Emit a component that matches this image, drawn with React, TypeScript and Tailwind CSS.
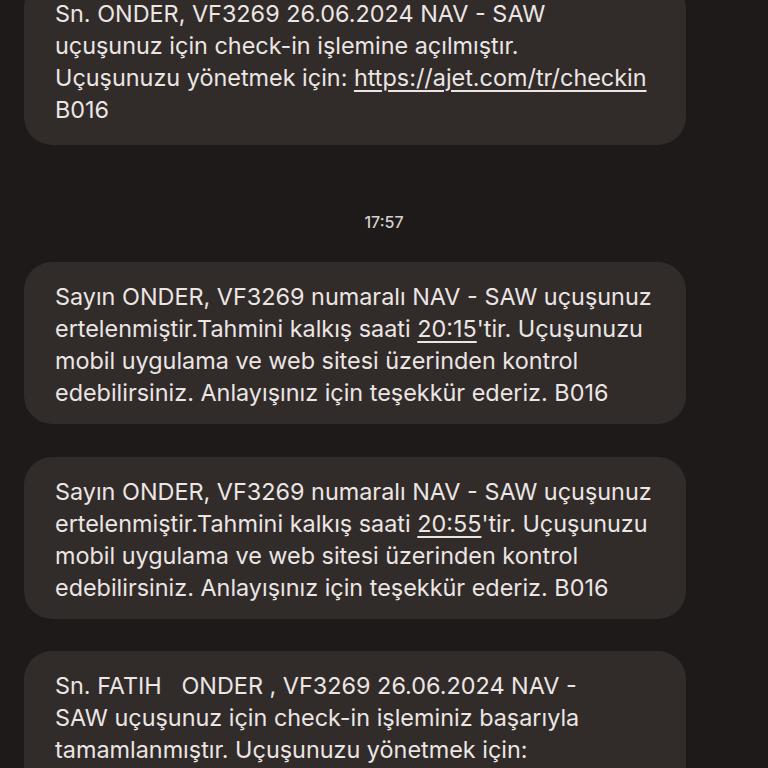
import React from 'react';

const Line: React.FC<{ children: React.ReactNode }> = ({ children }) => (
  <div className="whitespace-pre">{children}</div>
);

const U: React.FC<{ children: React.ReactNode }> = ({ children }) => (
  <span className="underline decoration-[1.5px] underline-offset-[4px]">{children}</span>
);

const Bubble: React.FC<{ className?: string; children: React.ReactNode }> = ({ className = '', children }) => (
  <div className={`w-[662px] rounded-[28px] bg-[#312b2a] pl-[31px] pr-4 text-[23.4px] leading-[32px] text-[#ebe5e3] ${className}`}>
    {children}
  </div>
);

const App: React.FC = () => {
  return (
    <div className="h-[768px] w-[768px] overflow-hidden bg-[#1e1a19] font-['Inter',_'Noto_Sans',_sans-serif]">
      <div className="flex flex-col px-6">
        <Bubble className="-mt-[20px] pt-[18px] pb-[19px]">
          <Line>Sn. ONDER, VF3269 26.06.2024 NAV - SAW</Line>
          <Line>uçuşunuz için check-in işlemine açılmıştır.</Line>
          <Line>
            Uçuşunuzu yönetmek için: <U>https://ajet.com/tr/checkin</U>
          </Line>
          <Line>B016</Line>
        </Bubble>

        <div className="mt-[67px] mb-[30px] w-[720px] text-center text-[16px] leading-[20px] font-medium text-[#d6d0ce]">
          17:57
        </div>

        <Bubble className="pt-[19px] pb-[15px]">
          <Line>Sayın ONDER, VF3269 numaralı NAV - SAW uçuşunuz</Line>
          <Line>
            ertelenmiştir.Tahmini kalkış saati <U>20:15</U>'tir. Uçuşunuzu
          </Line>
          <Line>mobil uygulama ve web sitesi üzerinden kontrol</Line>
          <Line>edebilirsiniz. Anlayışınız için teşekkür ederiz. B016</Line>
        </Bubble>

        <Bubble className="mt-[33px] pt-[19px] pb-[15px]">
          <Line>Sayın ONDER, VF3269 numaralı NAV - SAW uçuşunuz</Line>
          <Line>
            ertelenmiştir.Tahmini kalkış saati <U>20:55</U>'tir. Uçuşunuzu
          </Line>
          <Line>mobil uygulama ve web sitesi üzerinden kontrol</Line>
          <Line>edebilirsiniz. Anlayışınız için teşekkür ederiz. B016</Line>
        </Bubble>

        <Bubble className="mt-[32px] pt-[19px] pb-[15px]">
          <Line>Sn. FATIH   ONDER , VF3269 26.06.2024 NAV -</Line>
          <Line>SAW uçuşunuz için check-in işleminiz başarıyla</Line>
          <Line>tamamlanmıştır. Uçuşunuzu yönetmek için:</Line>
          <Line>https://ajet.com/tr/checkin</Line>
        </Bubble>
      </div>
    </div>
  );
};

export default App;
